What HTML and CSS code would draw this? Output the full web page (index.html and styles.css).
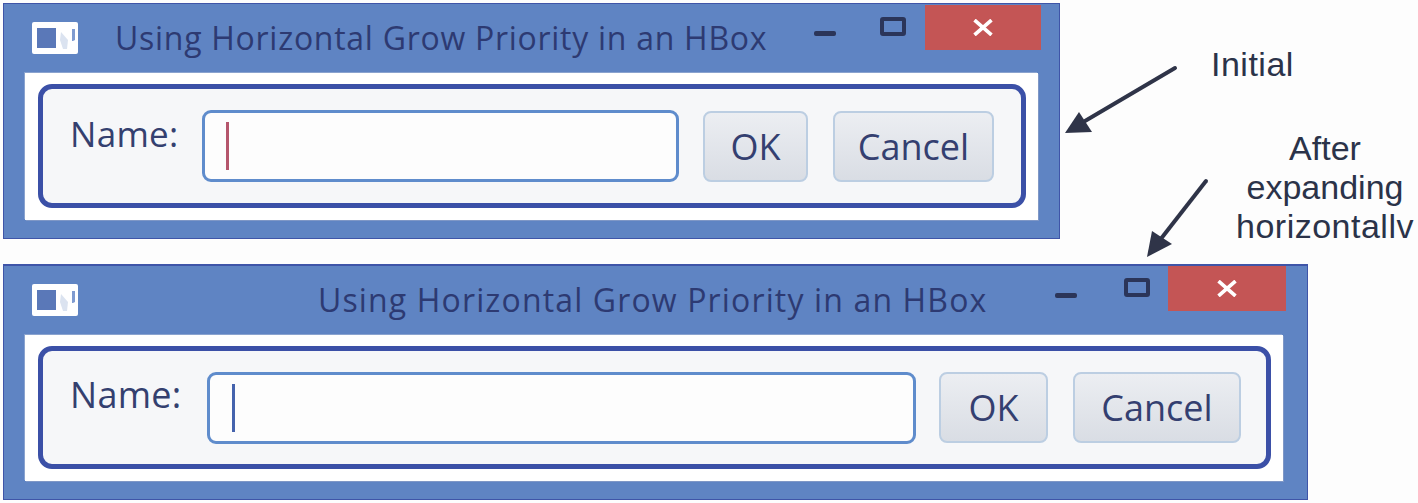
FILE: index.html
```html
<!DOCTYPE html>
<html lang="en">
<head>
    <meta charset="UTF-8">
    <title>Using Horizontal Grow Priority in an HBox</title>
    <link rel="stylesheet" href="styles.css">
</head>
<body>
    <!-- Initial window -->
    <div class="window window-initial">
        <div class="titlebar">
            <svg class="app-icon" viewBox="0 0 46 32">
                <rect x="0" y="0" width="46" height="32" rx="2" fill="#fff"/>
                <rect x="5" y="6" width="19" height="20" fill="#5a78b8"/>
                <path d="M40 7h3v11l-2 1h-1z" fill="#7f9bd0"/>
                <path d="M29 10l7 8-1 9h-4l-3-9z" fill="#dbe3f0"/>
            </svg>
            <span class="title">Using Horizontal Grow Priority in an HBox</span>
            <div class="controls">
                <span class="minimize"></span>
                <span class="maximize"></span>
                <span class="close">
                    <svg viewBox="0 0 20 16"><path d="M2 1l16 14M18 1L2 15" stroke="#fff" stroke-width="3.4" fill="none"/></svg>
                </span>
            </div>
        </div>
        <div class="client">
            <div class="hbox">
                <label class="name-label">Name:</label>
                <div class="text-field"><span class="caret"></span></div>
                <button class="btn btn-ok">OK</button>
                <button class="btn btn-cancel">Cancel</button>
            </div>
        </div>
    </div>

    <!-- Window after expanding -->
    <div class="window window-expanded">
        <div class="titlebar">
            <svg class="app-icon" viewBox="0 0 46 32">
                <rect x="0" y="0" width="46" height="32" rx="2" fill="#fff"/>
                <rect x="5" y="6" width="19" height="20" fill="#5a78b8"/>
                <path d="M40 7h3v11l-2 1h-1z" fill="#7f9bd0"/>
                <path d="M29 10l7 8-1 9h-4l-3-9z" fill="#dbe3f0"/>
            </svg>
            <span class="title">Using Horizontal Grow Priority in an HBox</span>
            <div class="controls">
                <span class="minimize"></span>
                <span class="maximize"></span>
                <span class="close">
                    <svg viewBox="0 0 20 16"><path d="M2 1l16 14M18 1L2 15" stroke="#fff" stroke-width="3.4" fill="none"/></svg>
                </span>
            </div>
        </div>
        <div class="client">
            <div class="hbox">
                <label class="name-label">Name:</label>
                <div class="text-field"><span class="caret"></span></div>
                <button class="btn btn-ok">OK</button>
                <button class="btn btn-cancel">Cancel</button>
            </div>
        </div>
    </div>

    <!-- Annotations -->
    <div class="note note-initial">Initial</div>
    <div class="note note-after">
        <div>After</div>
        <div>expanding</div>
        <div class="note-wide">horizontallv</div>
    </div>
    <svg class="arrows" viewBox="0 0 1418 503">
        <path d="M1175 68L1085 121" stroke="#2f3448" stroke-width="4" stroke-linecap="round" fill="none"/>
        <path d="M1065 133l14-21 13 20z" fill="#2f3448"/>
        <path d="M1206 181L1160 240" stroke="#2f3448" stroke-width="4" stroke-linecap="round" fill="none"/>
        <path d="M1147 257l5-26 20 13z" fill="#2f3448"/>
    </svg>
</body>
</html>
```

FILE: styles.css
```css
body {
    margin: 0;
    background-color: #fdfdfd;
    font-family: "Open Sans", sans-serif;
    color: #2f3b6e;
}

.window {
    position: absolute;
    left: 3px;
    box-sizing: border-box;
    display: flex;
    flex-direction: column;
    background-color: #5f84c3;
    border: 1px solid #3f55a8;
    padding: 0 21px 18px 21px;
}

.window-initial { top: 3px; width: 1057px; height: 236px; }
.window-expanded { top: 264px; width: 1305px; height: 236px; border-top-width: 2px; padding-right: 24px; }

.titlebar {
    height: 69px;
    display: flex;
    align-items: flex-start;
    flex-shrink: 0;
}

.app-icon {
    width: 46px;
    height: 32px;
    margin: 18px 0 0 7px;
    flex-shrink: 0;
}

.title {
    font-size: 32px;
    font-weight: 500;
    line-height: 40px;
    margin-top: 14px;
    letter-spacing: 0.72px;
    white-space: nowrap;
    color: #2d3a72;
}

.window-initial .title { margin-left: 37px; }
.window-expanded .title { margin-left: 240px; letter-spacing: 1.14px; }

.controls {
    margin-left: auto;
    display: flex;
    align-items: flex-start;
}

.minimize {
    width: 22px;
    height: 5px;
    background-color: #2b3559;
    border-radius: 2px;
    margin-top: 27px;
}

.maximize {
    box-sizing: border-box;
    width: 26px;
    height: 19px;
    border: 4px solid #2b3559;
    border-radius: 3px;
    margin-top: 13px;
}

.close {
    height: 45px;
    background-color: #c45555;
    display: flex;
    align-items: center;
    justify-content: center;
    margin-top: 1px;
}

.close svg { width: 22px; height: 17px; }

.window-initial .controls { margin-right: -3px; }
.window-initial .minimize { margin-right: 44px; }
.window-initial .maximize { margin-right: 19px; }
.window-initial .close { width: 116px; }

.window-expanded .controls { margin-right: -3px; }
.window-expanded .minimize { margin-right: 47px; }
.window-expanded .maximize { margin-right: 18px; margin-top: 12px; }
.window-expanded .close { width: 118px; margin-top: 0; }

.client {
    flex: 1;
    background-color: #fff;
    box-shadow: -1px -1px 0 #8aa3cf, 1px 1px 0 #7f97c6;
    padding: 11px 12px 12px 13px;
    display: flex;
}

.hbox {
    flex: 1;
    box-sizing: border-box;
    display: flex;
    align-items: center;
    background-color: #f6f7f9;
    border: 5px solid #3b50a7;
    border-radius: 14px;
    padding: 0 27px 0 27px;
}

.window-expanded .hbox { padding-right: 25px; }

.name-label {
    font-size: 35px;
    line-height: 40px;
    margin-top: -25px;
    letter-spacing: 0.3px;
    color: #34406f;
    white-space: nowrap;
}

.text-field {
    flex: 1;
    box-sizing: border-box;
    height: 72px;
    display: flex;
    align-items: center;
    background-color: #fdfdfd;
    border: 3px solid #5f8ccc;
    border-radius: 9px;
    padding-left: 21px;
}

.caret {
    width: 3px;
    height: 48px;
    background-color: #b5566c;
}

.window-expanded .caret { background-color: #4563ad; }

.btn {
    box-sizing: border-box;
    height: 71px;
    background: linear-gradient(#eceef2, #d9dde4);
    border: 2px solid #bccee2;
    border-radius: 8px;
    font-family: "Open Sans", sans-serif;
    font-size: 36px;
    color: #343f70;
    padding: 0;
}

.window-initial .name-label { width: 108px; margin-right: 24px; }
.window-initial .text-field { margin-right: 24px; }
.window-initial .btn-ok { width: 105px; margin-right: 25px; }
.window-initial .btn-cancel { width: 161px; }

.window-expanded .name-label { width: 113px; margin-right: 24px; font-size: 36px; }
.window-expanded .text-field { margin-right: 23px; padding-left: 22px; }
.window-expanded .btn-ok { width: 109px; margin-right: 25px; }
.window-expanded .btn-cancel { width: 168px; }

.note {
    position: absolute;
    font-family: "Liberation Sans", sans-serif;
    color: #2b3349;
    text-align: center;
    font-size: 34px;
}

.note-initial { left: 1211px; top: 45px; letter-spacing: 0.5px; }

.note-after {
    left: 1226px;
    top: 129px;
    width: 198px;
    line-height: 39px;
}

.note-wide { letter-spacing: 0.5px; }

.arrows {
    position: absolute;
    left: 0;
    top: 0;
    width: 1418px;
    height: 503px;
    pointer-events: none;
}
```
